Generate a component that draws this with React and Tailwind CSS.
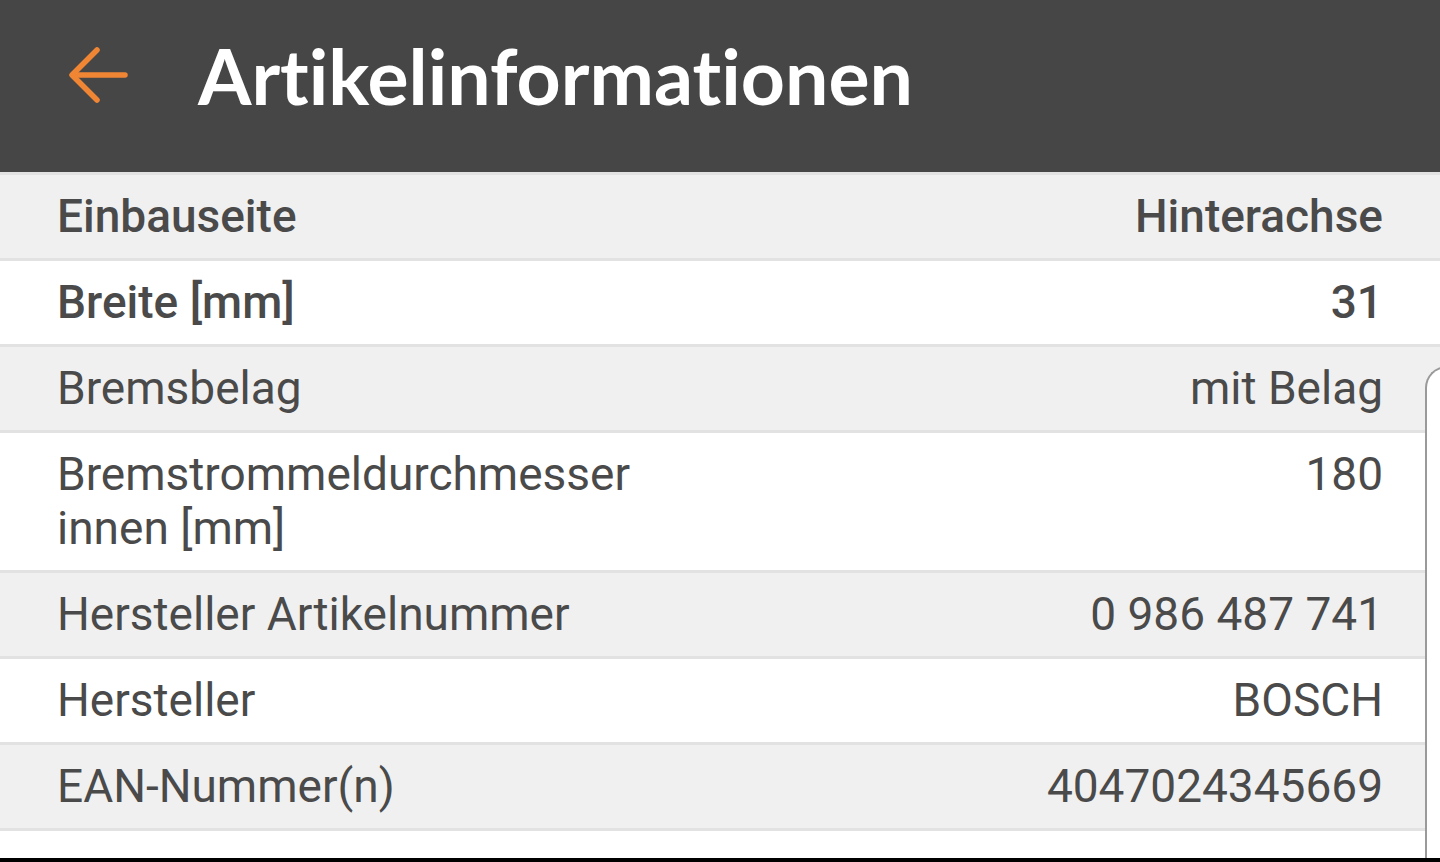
const ROWS = [
  { label: "Einbauseite", value: "Hinterachse", strong: true },
  { label: "Breite [mm]", value: "31", strong: true },
  { label: "Bremsbelag", value: "mit Belag" },
  { label: ["Bremstrommeldurchmesser", "innen [mm]"], value: "180" },
  { label: "Hersteller Artikelnummer", value: "0 986 487 741" },
  { label: "Hersteller", value: "BOSCH" },
  { label: "EAN-Nummer(n)", value: "4047024345669" },
];

export default function App() {
  return (
    <div className="relative h-[862px] w-[1440px] overflow-hidden bg-white flex flex-col">
      {/* Toolbar */}
      <header className="h-[172px] shrink-0 bg-[#464646] flex items-center pb-[22px]">
        <div className="w-[198px] pl-[68px] flex items-center">
          <BackArrow />
        </div>
        <h1 className="text-white font-bold text-[77px] leading-none font-['Lato','Open_Sans',sans-serif] [font-variant-ligatures:none]">
          Artikelinformationen
        </h1>
      </header>

      {/* Attribute table */}
      <div className="flex flex-col font-['Roboto','Noto_Sans',sans-serif] text-[#4a4a4a] text-[46px] leading-[54px]">
        {ROWS.map((row, i) => (
          <div
            key={i}
            className={`flex justify-between items-start px-[57px] pt-[14px] pb-[15px] border-t-[3px] border-[#e2e2e2] ${
              i % 2 === 0 ? "bg-[#f0f0f0]" : "bg-white"
            } ${row.strong ? "font-medium" : ""}`}
          >
            <span>
              {Array.isArray(row.label)
                ? row.label.map((l) => <span key={l} className="block">{l}</span>)
                : row.label}
            </span>
            <span className="text-right">{row.value}</span>
          </div>
        ))}
        <div className="border-t-[3px] border-[#e2e2e2]" />
      </div>

      <div className="flex-1" />
      <div className="h-[4px] shrink-0 bg-black" />

      {/* Edge of a sheet sliding in from the right */}
      <div className="absolute left-[1425px] top-[366px] w-[60px] h-[492px] bg-white border-l-2 border-t-2 border-[#9a9a9a] rounded-tl-[22px]" />
    </div>
  );
}

function BackArrow() {
  return (
    <svg width="60" height="60" viewBox="0 0 60 60" fill="none" stroke="#f08634" strokeWidth="5.5" strokeLinecap="round" strokeLinejoin="round">
      <path d="M57 30H5" />
      <path d="M29 5L4 30l25 25" />
    </svg>
  );
}
